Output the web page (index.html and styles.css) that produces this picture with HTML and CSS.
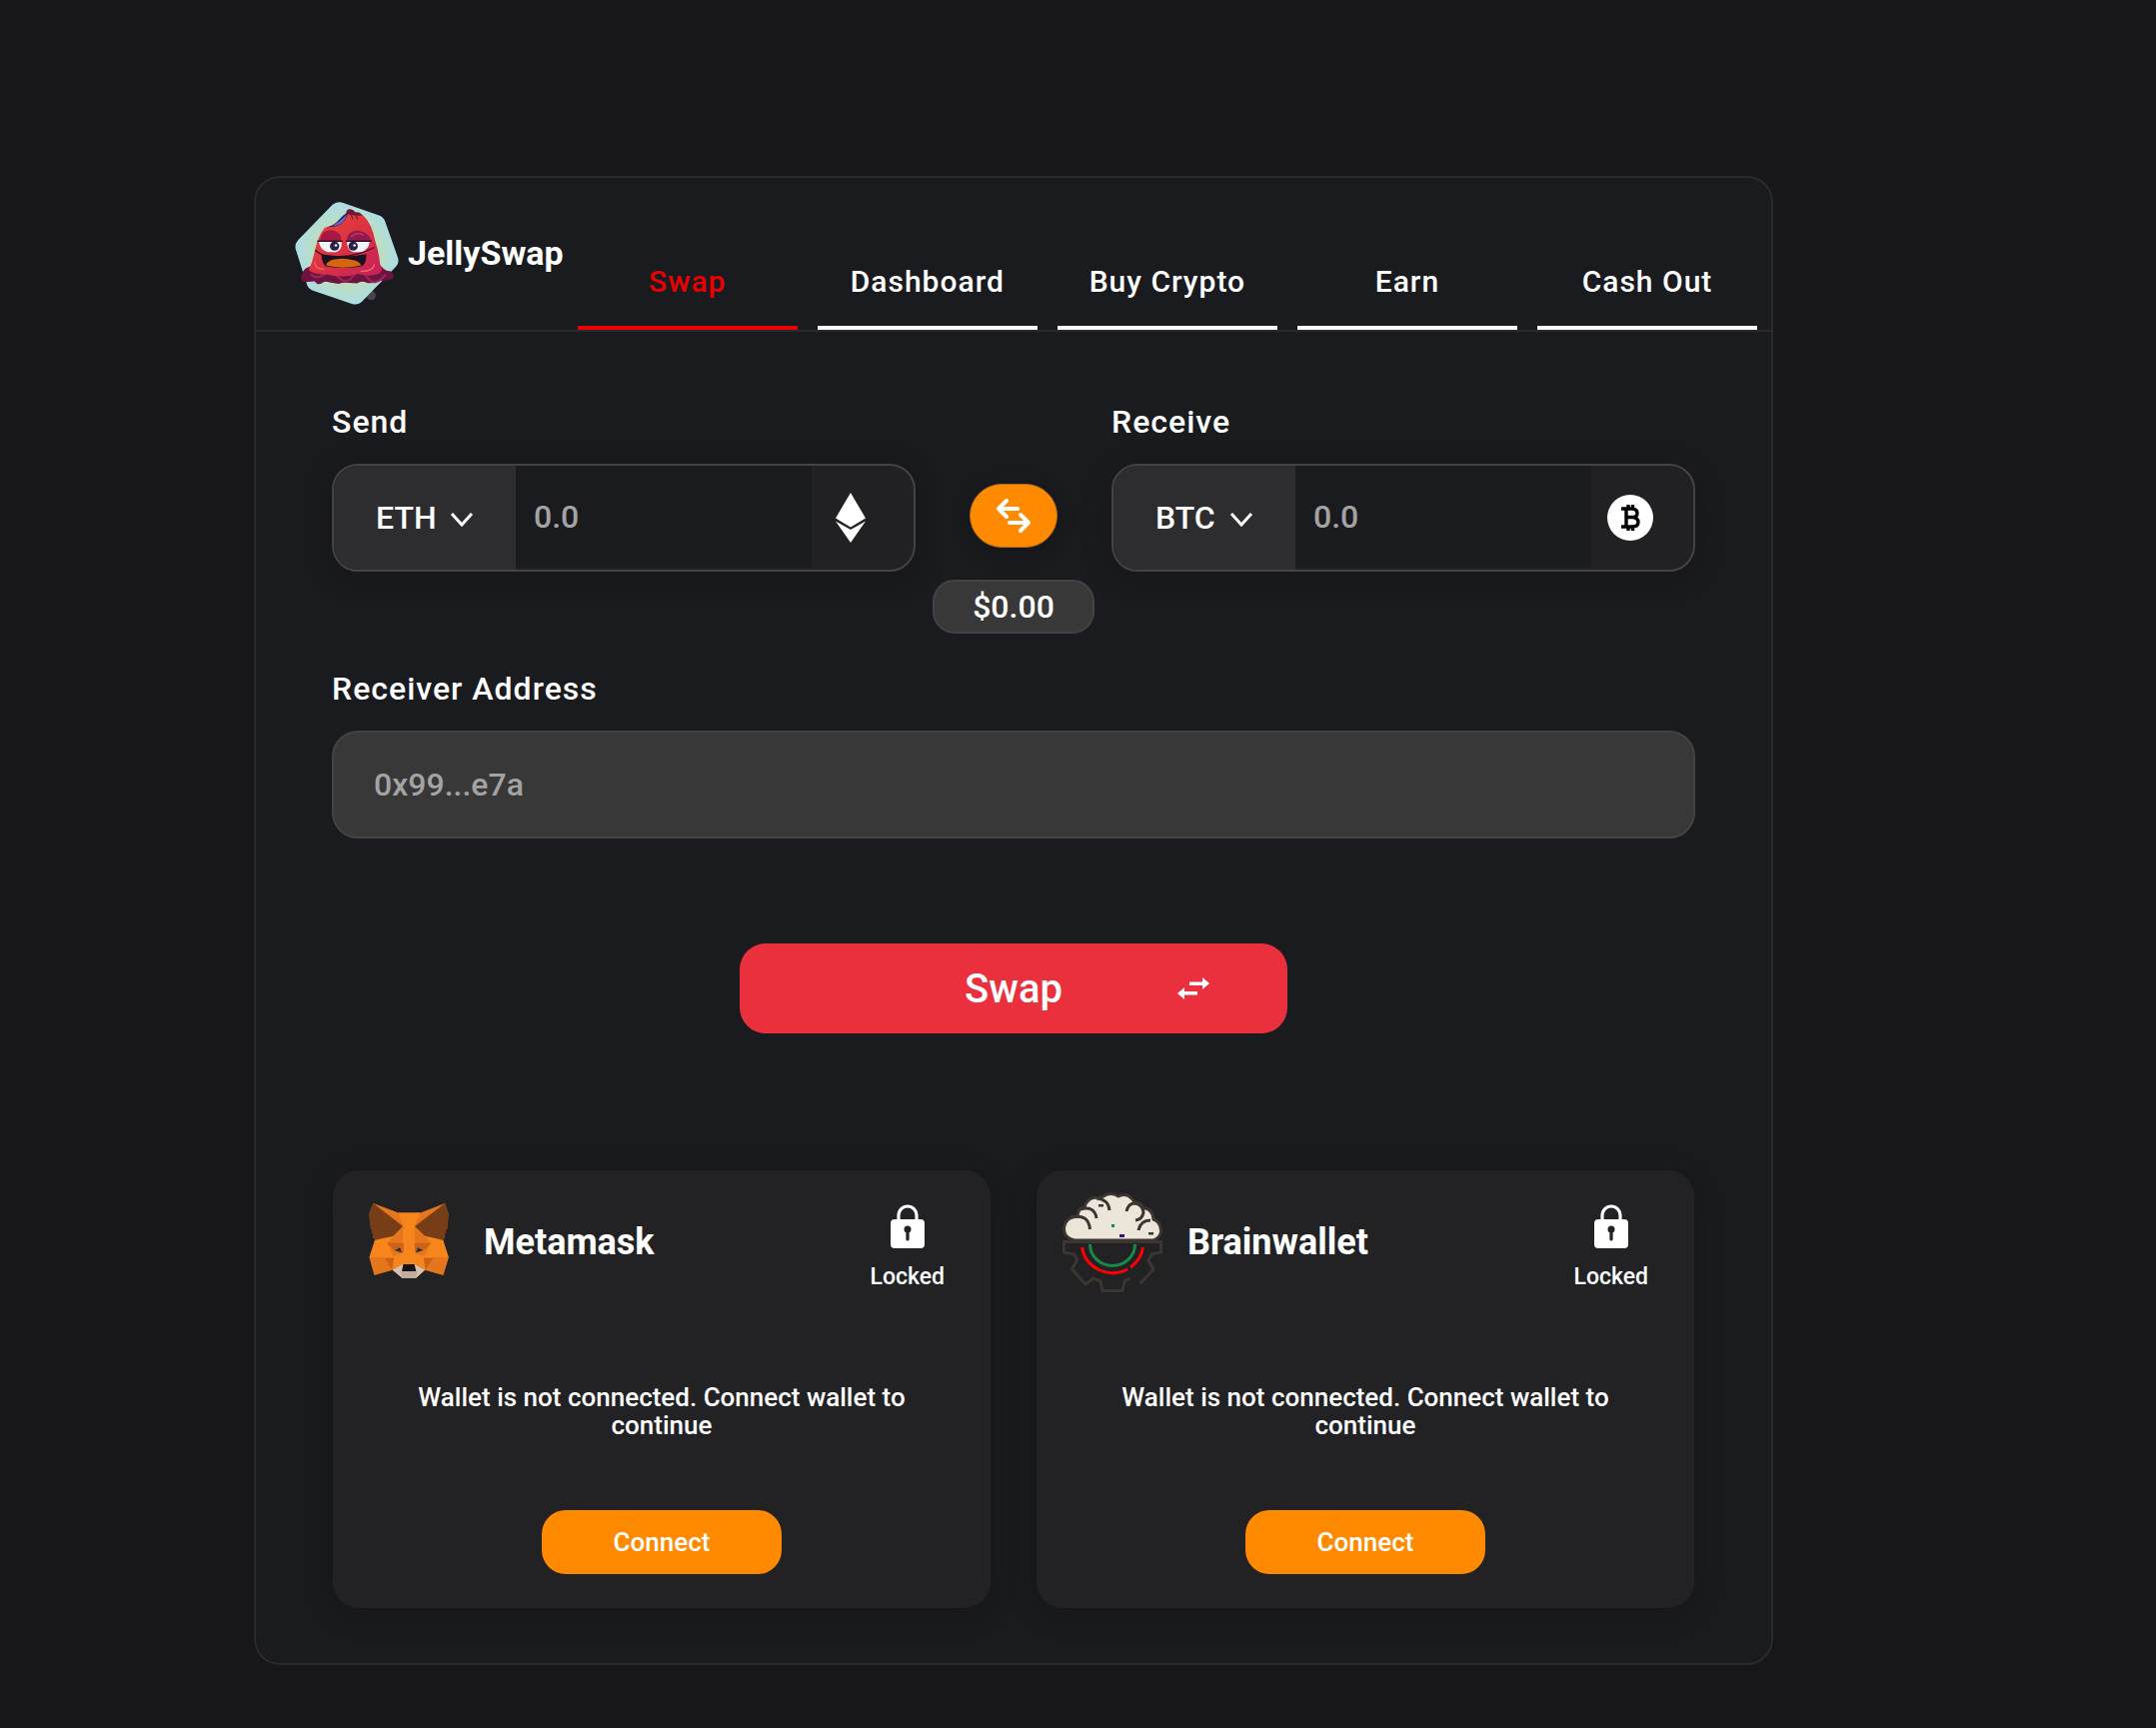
FILE: index.html
```
<!DOCTYPE html>
<html lang="en">
<head>
    <meta charset="UTF-8">
    <title>JellySwap</title>
    <link rel="stylesheet" href="styles.css">
</head>
<body>
    <main class="app">
        <header class="header">
            <div class="brand">
                <svg class="logo" viewBox="45 35 312 310">
                    <defs>
                        <radialGradient id="hexFill">
                            <stop offset="0" stop-color="#c9e0a0"/>
                            <stop offset="0.55" stop-color="#bfdfb8"/>
                            <stop offset="1" stop-color="#acdce6"/>
                        </radialGradient>
                        <linearGradient id="jelly" x1="0" y1="0" x2="1" y2="1">
                            <stop offset="0" stop-color="#e8453c"/>
                            <stop offset="0.45" stop-color="#de3440"/>
                            <stop offset="1" stop-color="#c41f5c"/>
                        </linearGradient>
                    </defs>
                    <circle cx="274" cy="317" r="14" fill="#444649"/>
                    <path d="M158 43Q172 31 190 38L298 76Q312 81 317 96L355 204Q359 219 349 230L245 337Q233 347 216 342L97 301Q84 296 80 281L47 178Q43 163 54 150Z" fill="url(#hexFill)"/>
                    <path d="M76 236Q62 250 64 268Q68 278 84 276L104 274Q112 286 124 281Q134 272 148 277L176 282Q192 276 206 279L232 280Q244 272 258 277Q272 284 286 274L330 270Q344 266 341 254Q338 242 322 243Q312 238 304 228L96 226Z" fill="#6c1340"/>
                    <path d="M92 252Q110 270 132 254T176 262T220 258T262 262T318 254" fill="none" stroke="#a02158" stroke-width="7"/>
                    <path d="M200 74Q196 56 212 57Q222 59 226 66Q240 64 249 76Q240 92 216 90Z" fill="#6b1836"/>
                    <path d="M134 113Q176 104 200 72Q222 78 250 76Q276 100 286 152Q298 190 301 222Q314 244 296 252Q270 262 236 252Q190 266 144 254Q98 254 86 240Q98 216 104 184Q114 138 134 113Z" fill="url(#jelly)"/>
                    <path d="M136 112Q160 108 174 92T203 66Q202 88 184 102Q164 112 136 112Z" fill="#28286a"/>
                    <path d="M158 106Q180 96 198 76Q198 92 182 101Q170 108 158 106Z" fill="#7764b8"/>
                    <path d="M212 72Q218 78 218 88M226 72Q232 80 234 88" fill="none" stroke="#7a1832" stroke-width="4"/>
                    <path d="M120 152Q124 117 156 120Q184 124 184 152Z" fill="#a81845"/>
                    <path d="M200 152Q204 118 238 122Q270 128 274 152Z" fill="#8e1c50"/>
                    <path d="M214 140Q228 124 252 134" fill="none" stroke="#c2305c" stroke-width="5"/>
                    <path d="M116 155H185Q188 182 168 186H144Q122 182 116 155Z" fill="#f1f4f8"/>
                    <path d="M201 155H270Q266 180 246 186H220Q202 182 201 155Z" fill="#f1f4f8"/>
                    <circle cx="164" cy="168" r="14" fill="#28204a"/>
                    <circle cx="220" cy="168" r="14" fill="#28204a"/>
                    <circle cx="168" cy="166" r="4" fill="#ffffff"/>
                    <circle cx="224" cy="166" r="4" fill="#ffffff"/>
                    <path d="M112 153H188M198 153H276" stroke="#2b0c20" stroke-width="5"/>
                    <path d="M106 180Q122 198 160 199Q222 204 284 172" fill="none" stroke="#35101e" stroke-width="4"/>
                    <path d="M124 193Q190 206 260 192Q260 222 246 228Q190 240 136 228Q126 218 124 193Z" fill="#1c1020"/>
                    <path d="M138 226Q142 212 164 208Q194 202 220 210Q240 214 244 226Q190 240 138 226Z" fill="#d5650f"/>
                    <path d="M104 216Q104 236 132 238M244 244Q282 244 284 222" fill="none" stroke="#ee6672" stroke-width="4" stroke-linecap="round"/>
                </svg>
                <h1 class="brand-name">JellySwap</h1>
            </div>
            <nav class="tabs">
                <a class="tab active" href="#swap">Swap</a>
                <a class="tab" href="#dashboard">Dashboard</a>
                <a class="tab" href="#buy">Buy Crypto</a>
                <a class="tab" href="#earn">Earn</a>
                <a class="tab" href="#cashout">Cash Out</a>
            </nav>
        </header>

        <form class="content">
            <div class="exchange">
                <div class="side">
                    <label class="label" for="sendAmount">Send</label>
                    <div class="field">
                        <div class="coin">
                            <select class="coin-select" aria-label="Send coin">
                                <option>ETH</option>
                                <option>BTC</option>
                            </select>
                            <svg class="chevron" viewBox="0 0 24 16"><path d="M2 2L12 13L22 2" fill="none" stroke="#fff" stroke-width="3"/></svg>
                        </div>
                        <input class="amount" id="sendAmount" type="text" placeholder="0.0">
                        <div class="coin-icon">
                            <svg class="eth" viewBox="0 0 30 50"><path d="M15 0L30 25.500L15 34.500L0 25.500ZM0 28.500L15 37L30 28.500L15 50Z" fill="#fff"/></svg>
                        </div>
                    </div>
                </div>

                <div class="middle">
                    <button class="switch" type="button" aria-label="Switch coins">
                        <svg class="switch-icon" viewBox="0 0 36 36"><path d="M22 11H3M11 3L3 11L11 19M14 25H33M25 17L33 25L25 33" fill="none" stroke="#fff" stroke-width="4" stroke-linecap="round" stroke-linejoin="round"/></svg>
                    </button>
                    <div class="price">$0.00</div>
                </div>

                <div class="side">
                    <label class="label" for="receiveAmount">Receive</label>
                    <div class="field">
                        <div class="coin">
                            <select class="coin-select" aria-label="Receive coin">
                                <option>BTC</option>
                                <option>ETH</option>
                            </select>
                            <svg class="chevron" viewBox="0 0 24 16"><path d="M2 2L12 13L22 2" fill="none" stroke="#fff" stroke-width="3"/></svg>
                        </div>
                        <input class="amount" id="receiveAmount" type="text" placeholder="0.0">
                        <div class="coin-icon">
                            <svg class="btc" viewBox="0 0 46 46">
                                <circle cx="23" cy="23" r="23" fill="#fff"/>
                                <path d="M14 14H25Q30 14.500 30 18.500T25 22.500H19M25 22.500Q31 23 31 27.500T25 32H14M19 14V32M21 10V14M25.500 10V14M21 32V36M25.500 32V36" fill="none" stroke="#000" stroke-width="3.400"/>
                            </svg>
                        </div>
                    </div>
                </div>
            </div>

            <div class="receiver">
                <label class="label" for="address">Receiver Address</label>
                <input class="address" id="address" type="text" placeholder="0x99...e7a">
            </div>

            <button class="swap-button" type="button">
                <span class="swap-text">Swap</span>
                <svg class="swap-icon" viewBox="0 0 32 22"><path d="M12 4.500H25V0L32 6L25 12V8H12ZM20 17.500H7V22L0 16L7 10V14H20Z" fill="#fff"/></svg>
            </button>
        </form>

        <section class="wallets">
            <article class="wallet">
                <div class="wallet-top">
                    <svg class="fox" viewBox="147 131 240 226">
                        <!-- face -->
                        <path d="M160 131L236 160H302L376 131L387 165L370 242L387 295L371 348L314 332L288 357H248L218 332L163 348L148 295L165 242L147 165Z" fill="#e4761b"/>
                        <path d="M236 160H302L284 200L290 315H244L250 200Z" fill="#f6851b"/>
                        <path d="M165 242L220 230L203 250L222 294H148ZM370 242L316 230L333 250L312 294H387Z" fill="#f6851b"/>
                        <path d="M222 290L252 280L246 315L218 332ZM312 290L282 280L290 315L316 332Z" fill="#f6851b"/>
                        <path d="M201 251H252L250 280L226 274ZM335 251H284L286 280L310 274Z" fill="#cd6116"/>
                        <path d="M194 297H222L216 331ZM340 297H312L318 331Z" fill="#cd6116"/>
                        <!-- ears -->
                        <path d="M160 131L249 200L220 230L165 242L157 232L160 225L153 220L157 213L151 207L147 165ZM376 131L285 200L316 230L370 242L378 232L374 225L381 220L378 213L384 207L387 165Z" fill="#763d16"/>
                        <path d="M224 273L240 264L246 280ZM310 273L294 264L288 280Z" fill="#233447"/>
                        <!-- snout -->
                        <path d="M218 332L248 315H286L316 332L288 357H248Z" fill="#d7c1b3"/>
                        <path d="M240 336H294L288 357H248Z" fill="#c0ad9e"/>
                        <path d="M250 315H284L289 336H246Z" fill="#161616"/>
                    </svg>
                    <h2 class="wallet-name">Metamask</h2>
                    <div class="status">
                        <svg class="lock" viewBox="0 0 34 44">
                            <path d="M8 16V11A9 9 0 0 1 26 11V16" fill="none" stroke="#fff" stroke-width="3.200"/>
                            <rect x="0" y="15" width="34" height="29" rx="4" fill="#fff"/>
                            <path d="M17 25V35" stroke="#222224" stroke-width="3.200" stroke-linecap="round"/>
                            <circle cx="17" cy="25" r="3.500" fill="#222224"/>
                        </svg>
                        <span class="status-text">Locked</span>
                    </div>
                </div>
                <p class="wallet-text">Wallet is not connected. Connect wallet to continue</p>
                <button class="connect" type="button">Connect</button>
            </article>

            <article class="wallet">
                <div class="wallet-top">
                    <svg class="brain" viewBox="0 0 100 100">
                        <g fill="none" stroke="#3b3631" stroke-width="3">
                            <path d="M12 48Q2 46 1.500 37Q2 25 15 24Q16 15 22 15Q25 4 36 5.500Q40 5 41 4Q48 -1 56 4Q64 0 69 6Q71 8 72 10Q79 10 81 16Q90 16 91 27Q99 30 98.500 40Q97 46 91 48Z" fill="#ece6da"/>
                            <path d="M9 25Q26 21 27.500 37M18 17Q32 13 34 26M34 6Q46 7 47 18M64 19Q66 11 72 11Q80 12 81 20Q80 27 73 28M76 38Q78 28 88 28"/>
                            <path d="M68 86L62 89L60 98.500H40L38 89L31 86L23 92L9.500 77L14.500 68L12 62L1.500 60V49.500H98.500V60L89 62L86 68L91 77L78 91"/>
                        </g>
                        <path d="M27.500 52A22.500 21.500 0 0 0 72.500 52" fill="none" stroke="#178a47" stroke-width="3"/>
                        <path d="M19.500 55A31 30 0 0 0 65 77M68 75A31 30 0 0 0 80.500 55" fill="none" stroke="#f00" stroke-width="3"/>
                        <path d="M36 12H41V14.500H36ZM86 40H91V42.500H86Z" fill="#3b3631"/>
                        <path d="M49 32H52V35H49Z" fill="#178a47"/>
                        <path d="M57 42H62V45H57Z" fill="#3c0f78"/>
                    </svg>
                    <h2 class="wallet-name">Brainwallet</h2>
                    <div class="status">
                        <svg class="lock" viewBox="0 0 34 44">
                            <path d="M8 16V11A9 9 0 0 1 26 11V16" fill="none" stroke="#fff" stroke-width="3.200"/>
                            <rect x="0" y="15" width="34" height="29" rx="4" fill="#fff"/>
                            <path d="M17 25V35" stroke="#222224" stroke-width="3.200" stroke-linecap="round"/>
                            <circle cx="17" cy="25" r="3.500" fill="#222224"/>
                        </svg>
                        <span class="status-text">Locked</span>
                    </div>
                </div>
                <p class="wallet-text">Wallet is not connected. Connect wallet to continue</p>
                <button class="connect" type="button">Connect</button>
            </article>
        </section>
    </main>
</body>
</html>
```
FILE: styles.css
```
*{
    box-sizing: border-box;
    margin: 0;
    padding: 0;
}
body{
    background: #171719;
    color: #fff;
    font-family: Roboto, "Liberation Sans", sans-serif;
    font-weight: 500;
}
button,input,select{
    font: inherit;
    color: inherit;
    border: none;
    outline: none;
}
button{
    cursor: pointer;
}
svg{
    display: block;
    flex: none;
}
.app{
    max-width: 1520px;
    margin: 176px 64px 62px 254px;
    background: #1a1b1f;
    border: 2px solid #2a2a2b;
    border-radius: 26px;
}

/* header */
.header{
    display: flex;
    align-items: stretch;
    gap: 14px;
    height: 154px;
    padding-left: 39px;
    padding-right: 14px;
    border-bottom: 2px solid #2a2a2b;
}
.brand{
    display: flex;
    align-items: center;
    gap: 9px;
    padding-bottom: 2px;
}
.logo{
    width: 104px;
    height: 103px;
}
.brand-name{
    font-size: 34px;
    line-height: 40px;
    font-weight: 700;
}
.tabs{
    flex: 1;
    display: flex;
    gap: 20px;
}
.tab{
    flex: 1;
    padding-top: 84px;
    border-bottom: 4px solid #f8f8fc;
    color: #fff;
    font-size: 30px;
    line-height: 40px;
    letter-spacing: 1px;
    text-align: center;
    text-decoration: none;
}
.active{
    color: #eb0000;
    border-color: #eb0000;
}

/* swap form */
.content{
    display: flex;
    flex-direction: column;
    padding: 70px 76px 0;
}
.exchange{
    display: flex;
}
.side{
    flex: 1;
    min-width: 0;
}
.label{
    display: block;
    margin-bottom: 22px;
    font-size: 32px;
    line-height: 40px;
    letter-spacing: 1px;
}
.field{
    display: flex;
    height: 108px;
    border: 2px solid #434343;
    border-radius: 26px;
    background: #212123;
    overflow: hidden;
    box-shadow: 0 6px 30px rgba(0,0,0,0.2);
}
.coin{
    position: relative;
    flex: none;
    width: 182px;
}
.coin-select{
    appearance: none;
    width: 100%;
    height: 100%;
    padding-left: 42px;
    background: #2d2d2f;
    font-size: 32px;
}
.chevron{
    position: absolute;
    top: 46px;
    right: 42px;
    width: 24px;
    height: 16px;
    pointer-events: none;
}
.amount{
    flex: 1;
    min-width: 0;
    height: 102px;
    padding: 0 18px;
    background: #1a1b1f;
    font-size: 32px;
}
.amount::placeholder,.address::placeholder{
    color: #a3a3a3;
    opacity: 1;
}
.coin-icon{
    flex: none;
    display: flex;
    align-items: center;
    justify-content: center;
    width: 102px;
    padding-right: 24px;
}
.eth{
    width: 30px;
    height: 50px;
}
.btc{
    width: 46px;
    height: 46px;
}
.middle{
    flex: none;
    display: flex;
    flex-direction: column;
    align-items: center;
    gap: 32px;
    width: 196px;
    padding-top: 82px;
}
.switch{
    display: flex;
    align-items: center;
    justify-content: center;
    width: 88px;
    height: 64px;
    background: #ff8a00;
    border: 1px solid #b06a1c;
    border-radius: 32px;
    box-shadow: 0 4px 20px rgba(0,0,0,0.2);
}
.switch-icon{
    width: 36px;
    height: 36px;
}
.price{
    width: 162px;
    height: 54px;
    background: #383838;
    border: 2px solid #434343;
    border-radius: 22px;
    font-size: 32px;
    line-height: 50px;
    text-align: center;
}
.receiver{
    margin-top: 35px;
}
.address{
    display: block;
    width: 100%;
    height: 108px;
    padding: 0 40px;
    background: #383838;
    border: 2px solid #434343;
    border-radius: 26px;
    font-size: 32px;
}
.swap-button{
    align-self: center;
    display: grid;
    grid-template-columns: 1fr auto 1fr;
    align-items: center;
    width: 548px;
    height: 90px;
    margin-top: 105px;
    background: #e9303c;
    border-radius: 26px;
    font-size: 40px;
}
.swap-text{
    grid-column: 2;
}
.swap-icon{
    width: 32px;
    height: 22px;
    margin-right: 78px;
    justify-self: end;
}

/* wallets */
.wallets{
    display: flex;
    gap: 46px;
    padding: 137px 77px 55px;
}
.wallet{
    flex: 1;
    display: flex;
    flex-direction: column;
    align-items: center;
    height: 438px;
    padding-top: 22px;
    background: #222224;
    border-radius: 26px;
    box-shadow: 0 6px 30px rgba(0,0,0,0.2);
}
.wallet-top{
    align-self: stretch;
    display: flex;
    align-items: center;
    height: 100px;
    padding: 0 46px 0 26px;
}
.fox{
    width: 80px;
    height: 75px;
    margin: 0 10px 4px;
}
.brain{
    width: 100px;
    height: 100px;
}
.wallet-name{
    flex: 1;
    margin-left: 25px;
    font-size: 36px;
    line-height: 40px;
    font-weight: 700;
}
.status{
    display: flex;
    flex-direction: column;
    align-items: center;
    gap: 15px;
    padding-top: 10px;
}
.lock{
    width: 34px;
    height: 44px;
}
.status-text{
    font-size: 23px;
    line-height: 28px;
}
.wallet-text{
    width: 520px;
    margin-top: 91px;
    font-size: 26px;
    line-height: 28px;
    text-align: center;
}
.connect{
    width: 240px;
    height: 64px;
    margin-top: 71px;
    background: #ff8a00;
    border-radius: 24px;
    font-size: 26px;
}
```
